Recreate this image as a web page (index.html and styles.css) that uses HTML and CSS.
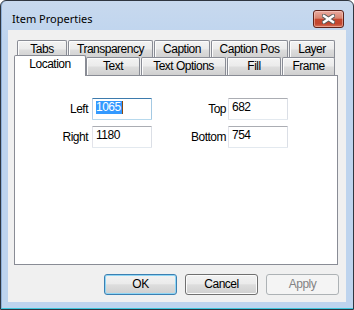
FILE: index.html
```html
<!DOCTYPE html>
<html>
<head>
<meta charset="utf-8">
<title>Item Properties</title>
<link rel="stylesheet" href="styles.css">
</head>
<body>
<div class="window">
  <div class="titlebar">
    <span class="title">Item Properties</span>
    <div class="close" aria-label="Close">
      <svg width="13" height="10" viewBox="0 0 13 10">
        <path d="M2 2 L11 8 M11 2 L2 8" stroke="#5a5a5a" stroke-width="4.4" stroke-linecap="square" fill="none"/>
        <path d="M2 2 L11 8 M11 2 L2 8" stroke="#ffffff" stroke-width="2.4" stroke-linecap="square" fill="none"/>
      </svg>
    </div>
  </div>
  <div class="client">
    <div class="tabstrip">
      <div class="tabrow row1">
        <div class="tab w-tabs">Tabs</div>
        <div class="tab w-transp">Transparency</div>
        <div class="tab w-caption">Caption</div>
        <div class="tab w-cappos">Caption Pos</div>
        <div class="tab w-layer">Layer</div>
      </div>
      <div class="tabrow row2">
        <div class="tab selected">Location</div>
        <div class="tab w-text">Text</div>
        <div class="tab w-textopt">Text Options</div>
        <div class="tab w-fill">Fill</div>
        <div class="tab w-frame">Frame</div>
      </div>
    </div>
    <div class="panel">
      <div class="fields">
        <label class="lbl lbl-a">Left</label>
        <div class="edit focus"><span class="sel">1065</span><span class="caret"></span></div>
        <label class="lbl lbl-b">Top</label>
        <div class="edit">682</div>
        <label class="lbl lbl-a">Right</label>
        <div class="edit">1180</div>
        <label class="lbl lbl-b">Bottom</label>
        <div class="edit">754</div>
      </div>
    </div>
    <div class="buttons">
      <div class="btn default">OK</div>
      <div class="btn">Cancel</div>
      <div class="btn disabled">Apply</div>
    </div>
  </div>
</div>
</body>
</html>
```

FILE: styles.css
```css
body {
  margin: 0;
  background: #ffffff;
}

.window {
  width: 354px;
  height: 310px;
  box-sizing: border-box;
  border: 1px solid #2f3640;
  border-radius: 6px 6px 0 0;
  background: linear-gradient(#c8d9ee, #bed4ee 40px);
  box-shadow: inset 0 -1px 0 #3ec6dc, inset 1px 0 0 #8fb0d8;
  padding: 0 7px 7px;
  display: flex;
  flex-direction: column;
  font-family: "Liberation Sans", Arial, sans-serif;
  font-size: 12px;
  letter-spacing: -0.5px;
  color: #000;
}

.titlebar {
  height: 29px;
  flex: none;
  display: flex;
  align-items: flex-start;
  justify-content: space-between;
  padding: 0 2px 0 4px;
}

.title {
  margin-top: 10px;
  font-family: "Noto Sans", "Open Sans", sans-serif;
  font-size: 11px;
  letter-spacing: 0;
  line-height: 16px;
  color: #000;
}

.close {
  margin-top: 9px;
  width: 31px;
  height: 18px;
  box-sizing: border-box;
  border: 1px solid #5e2219;
  border-radius: 3px;
  background: linear-gradient(#e9aba1 0%, #d9846f 45%, #c5472f 52%, #c24630 80%, #d8735a 100%);
  box-shadow: inset 0 0 0 1px rgba(255, 220, 210, 0.45);
  display: flex;
  align-items: center;
  justify-content: center;
}

.client {
  flex: 1;
  background: #f0f0f0;
  padding: 10px 7px 0 6px;
  display: flex;
  flex-direction: column;
}

.tabstrip {
  margin-left: 3px;
  display: flex;
  flex-direction: column;
}

.tabrow {
  display: flex;
  gap: 1px;
}

.row1 {
  height: 17px;
}

.row2 {
  height: 18px;
  align-items: flex-end;
}

.tab {
  box-sizing: border-box;
  border: 1px solid #898c95;
  border-bottom: 0;
  border-radius: 2px 2px 0 0;
  background: linear-gradient(#f3f3f3 0%, #ebebeb 48%, #dddddd 52%, #d0d0d0 100%);
  box-shadow: inset 1px 1px 0 #fcfcfc;
  display: flex;
  align-items: center;
  justify-content: center;
  white-space: nowrap;
  line-height: 13px;
}

.row1 .tab {
  height: 18px;
  padding-bottom: 1px;
}

.row2 .tab {
  height: 18px;
}

.tab.selected {
  width: 72px;
  height: 21px;
  margin-left: -3px;
  margin-right: -1px;
  margin-bottom: -1px;
  background: #ffffff;
  box-shadow: none;
  position: relative;
  z-index: 2;
  padding-bottom: 3px;
}

.w-tabs { width: 50px; }
.w-transp { width: 85px; }
.w-caption { width: 56px; }
.w-cappos { width: 77px; }
.w-layer { width: 46px; }
.w-text { width: 54px; }
.w-textopt { width: 85px; }
.w-fill { width: 54px; }
.w-frame { width: 53px; }

.panel {
  height: 190px;
  box-sizing: border-box;
  margin-right: 1px;
  border: 1px solid #898c95;
  background: #ffffff;
  padding-top: 22px;
}

.fields {
  display: grid;
  grid-template-columns: 77px 60px 76px 60px;
  grid-auto-rows: 22px;
  row-gap: 6px;
}

.lbl {
  text-align: right;
  line-height: 22px;
  white-space: nowrap;
}

.lbl-a { padding-right: 4px; }
.lbl-b { padding-right: 2px; }

.edit {
  box-sizing: border-box;
  border: 1px solid;
  border-color: #abadb3 #dbdfe6 #e3e9ef #e2e3ea;
  border-radius: 1px;
  background: #ffffff;
  padding: 2px 3px 0;
  line-height: 13px;
  white-space: nowrap;
}

.edit.focus {
  border-color: #3d7bad #a4c9e3 #b7d9ed #b5cfe7;
}

.sel {
  display: inline-block;
  vertical-align: top;
  height: 13px;
  line-height: 13px;
  padding-right: 1px;
  background: #3399ff;
  color: #ffffff;
}

.caret {
  display: inline-block;
  vertical-align: top;
  width: 1px;
  height: 13px;
  background: #8a4a10;
}

.buttons {
  margin-top: 9px;
  display: flex;
  justify-content: flex-end;
  gap: 8px;
}

.btn {
  width: 73px;
  height: 21px;
  box-sizing: border-box;
  border: 1px solid #707070;
  border-radius: 3px;
  background: linear-gradient(#f2f2f2 0%, #ebebeb 45%, #dddddd 52%, #cfcfcf 100%);
  box-shadow: inset 0 0 0 1px #fbfbfb;
  display: flex;
  align-items: center;
  justify-content: center;
  line-height: 13px;
}

.btn.default {
  border-color: #3c7fb1;
  box-shadow: inset 0 0 0 1px #8fd6f5;
}

.btn.disabled {
  border-color: #adb2b5;
  background: #f4f4f4;
  box-shadow: none;
  color: #838383;
}
```
